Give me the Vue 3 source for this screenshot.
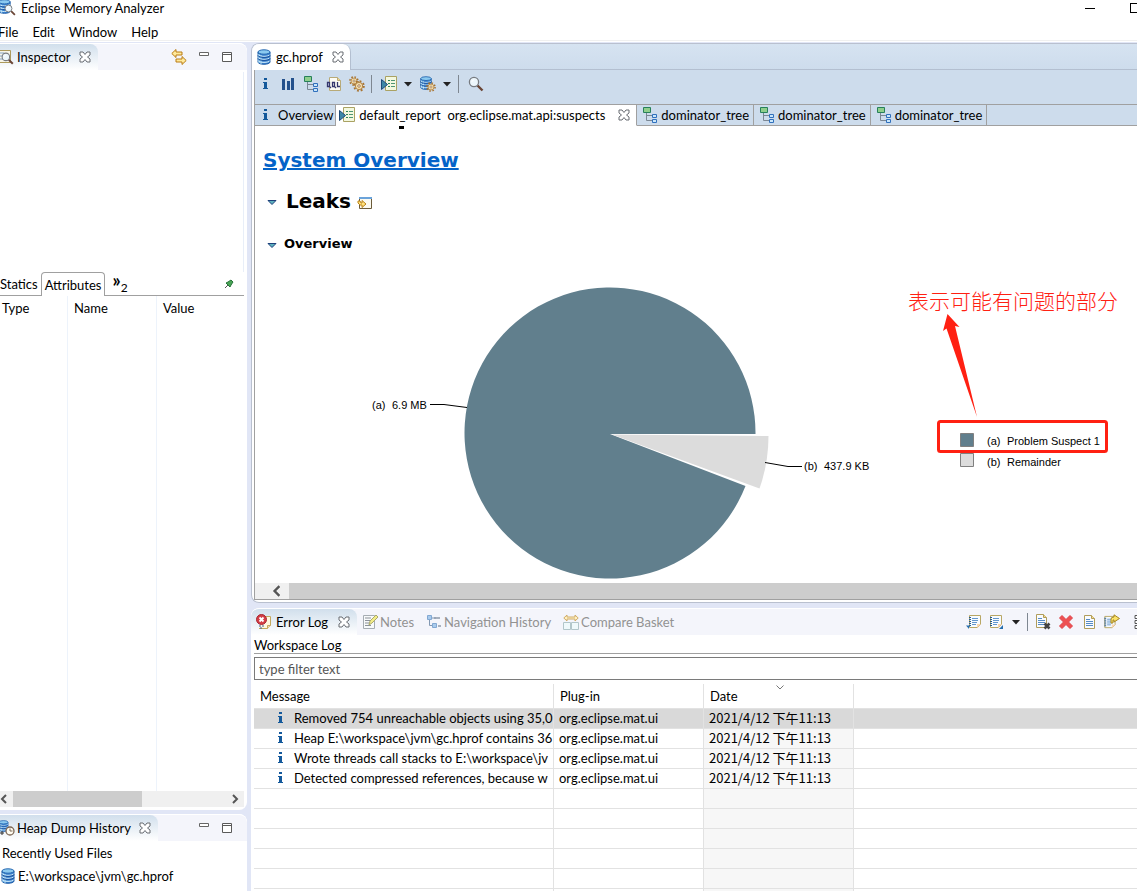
<template>
  <div class="window">
    <svg class="sprite" aria-hidden="true">
      <symbol id="db" viewBox="0 0 16 16">
        <path d="M2 3v10c0 3 12 3 12 0V3z" fill="#3d83cf" stroke="#1b5aa5" />
        <path d="M3 5v9M5 6v9" stroke="#a8dcf6" stroke-width="1" />
        <path d="M2 5.5c1 2.5 11 2.5 12 0M2 8.5c1 2.5 11 2.5 12 0M2 11.500c1 2.500 11 2.500 12 0" fill="none" stroke="#d5f0fc" />
        <path d="M2 6.500c1 2.500 11 2.500 12 0M2 9.500c1 2.500 11 2.500 12 0" fill="none" stroke="#174f9b" />
        <ellipse cx="8" cy="3" rx="6" ry="2.200" fill="#8bc9ef" stroke="#2567b0" />
      </symbol>
      <symbol id="lens" viewBox="0 0 16 16">
        <path d="m9.500 9.500 5 5" stroke="#6b4636" stroke-width="2.400" />
        <circle cx="6" cy="6" r="4.600" fill="#edf6fb" stroke="#777b80" stroke-width="1.300" />
        <path d="M3.800 6A2.500 2.500 0 0 1 6 3.800" fill="none" stroke="#fff" />
      </symbol>
      <symbol id="mat" viewBox="0 0 16 16">
        <use href="#db" x="-3" y="-1" width="15" height="15" />
        <use href="#lens" x="4" y="4" width="12" height="12" />
      </symbol>
      <symbol id="inspector" viewBox="0 0 16 16">
        <path d="M-1 1.500H10.500V13.500H-1" fill="#f7f5e8" stroke="#ad9a5c" />
        <path d="M0 4h4M0 7h3M0 10h4" stroke="#83a2c7" />
        <use href="#lens" x="1" y="3" width="13" height="13" />
      </symbol>
      <symbol id="close" viewBox="0 0 12 12">
        <path d="M1 1h3l2 2.500L8 1h3v3L8.500 6 11 8v3H8L6 8.500 4 11H1V8l2.500-2L1 4z" fill="#fff" stroke="#686c72" />
      </symbol>
      <symbol id="link" viewBox="0 0 16 16">
        <path d="M.8 4.500 5 .5V3h6v3H5v2.500z" fill="#ffe99a" stroke="#b97b12" />
        <path d="M15.200 11.500 11 7.500V10H5v3h6v2.500z" fill="#ffe99a" stroke="#b97b12" />
      </symbol>
      <symbol id="min" viewBox="0 0 12 12">
        <path d="M1.500 1.500h9v3h-9z" fill="#fff" stroke="#666" />
      </symbol>
      <symbol id="max" viewBox="0 0 12 12">
        <path d="M1.500 1.500h9v9h-9zM1.500 3.500h9" fill="#fff" stroke="#5a5a5a" />
      </symbol>
      <symbol id="info" viewBox="0 0 16 16">
        <path d="M7 2h3v2H7zM6 6h4v6h1v1H6v-1h1V7H6z" fill="#14599b" />
      </symbol>
      <symbol id="bars" viewBox="0 0 16 16">
        <path d="M2 3h3v11H2zM7 5h3v9H7zM11 2h3v12h-3z" fill="#24518c" />
      </symbol>
      <symbol id="tree" viewBox="0 0 16 16">
        <path d="M4.500 6v7.500H10M4.500 8.500H10" fill="none" stroke="#7b8794" />
        <path d="M1.500.5h7v5h-7z" fill="#8fce8c" stroke="#27805a" />
        <path d="M10.500 7.500h4v3h-4zM10.500 12.500h4v3h-4z" fill="#c9e6fa" stroke="#3070bd" />
      </symbol>
      <symbol id="oql" viewBox="0 0 16 16">
        <path d="M3.500 1.500h8l3 3v10h-11z" fill="#fdfcf4" stroke="#b8aa78" />
        <path d="M11.500 1.500v3h3" fill="#f0d890" stroke="#b8aa78" />
        <path d="M1.500 6.500h2v4h-2zM6.500 6.500h2v4h-2zM3 10l2 2M8 10l2 2M11.500 6v4.500H14" fill="none" stroke="#35376d" stroke-width="1.300" />
      </symbol>
      <symbol id="gear" viewBox="0 0 16 16">
        <circle cx="8" cy="8" r="6.500" fill="none" stroke="#a87431" stroke-width="2.400" stroke-dasharray="2.500 2.600" />
        <circle cx="8" cy="8" r="4.700" fill="#f7e3b4" stroke="#b58645" stroke-width="1.400" />
        <circle cx="8" cy="8" r="1.700" fill="#fff" stroke="#8d5c29" />
      </symbol>
      <symbol id="gears" viewBox="0 0 16 16">
        <use href="#gear" x="0" y="0" width="10" height="10" />
        <use href="#gear" x="4" y="4" width="12" height="12" />
      </symbol>
      <symbol id="report" viewBox="0 0 16 16">
        <path d="M4.500.500h11v14h-11z" fill="#f3f8df" stroke="#aaa263" />
        <path d="M7 4.500h2M7 7.500h2M7 10.500h2" stroke="#318355" />
        <path d="M10 4.500h4M10 7.500h4M10 10.500h4" stroke="#4e9573" />
        <path d="M.5 3.500v10l6-5z" fill="#3e88a6" stroke="#1f4b78" />
      </symbol>
      <symbol id="dbgear" viewBox="0 0 16 16">
        <use href="#db" x="-1" y="0" width="14" height="14" />
        <use href="#gear" x="6" y="6" width="10" height="10" />
      </symbol>
      <symbol id="pin" viewBox="0 0 10 10">
        <path d="m1 9 3-3" stroke="#555" />
        <path d="m2 4 2-1 3-2 2 2-2 3-1 2z" fill="#49a456" stroke="#257338" />
      </symbol>
      <symbol id="twisty" viewBox="0 0 10 6">
        <path d="M1 .5h8L5 4.500z" fill="#5cb0bd" stroke="#1d3f7a" />
      </symbol>
      <symbol id="open" viewBox="0 0 16 14">
        <path d="M2.500 1.500h12v11h-12z" fill="#fbfaf1" stroke="#6b5b3a" />
        <path d="M2 2h13" stroke="#6ba3da" stroke-width="2" />
        <path d="M1 5h2l1 2h1V4.500L9 8l-4 3.500V9H3L1 7z" fill="#ffe17c" stroke="#bb8419" />
      </symbol>
      <symbol id="caret" viewBox="0 0 8 5">
        <path d="M0 0h8L4 4.500z" fill="#222" />
      </symbol>
      <symbol id="history" viewBox="0 0 16 16">
        <use href="#db" x="-3" y="0" width="13" height="12" />
        <path d="M0 13h4M2 11v4" stroke="#333" />
        <circle cx="10" cy="11" r="4" fill="#fffdf2" stroke="#7b6655" stroke-width="1.300" />
        <path d="M10 8.500V11h2.500" fill="none" stroke="#7b6655" />
      </symbol>
      <symbol id="errorlog" viewBox="0 0 16 16">
        <path d="M6 2.500h8.500v9l-3 3H3" fill="#fff8df" stroke="#c4a95e" />
        <path d="M11.500 14.500v-3h3" fill="#f8d8b0" stroke="#c4a95e" />
        <circle cx="5.500" cy="5.500" r="5" fill="#d33e46" stroke="#a92630" />
        <path d="m3.500 3.500 4 4m0-4-4 4" stroke="#fff" stroke-width="1.800" />
        <path d="M3 12h2m1 0h2M4 14h2" stroke="#3c5e96" />
      </symbol>
      <symbol id="notes" viewBox="0 0 16 16">
        <path d="M1.500 1.500h11v13h-11z" fill="#f8fafb" stroke="#a6adb3" />
        <path d="M3 4h6M3 6.500h5M3 9h4M3 11.500h6" stroke="#8c9299" />
        <path d="m7 11 1-4 6-6 2 2-6 6z" fill="#f3ed88" stroke="#aaa96d" />
      </symbol>
      <symbol id="nav" viewBox="0 0 16 16">
        <path d="M3.500 4v7.500H7M6 4h4" fill="none" stroke="#8298b2" />
        <path d="M1.500 1.500h4v4h-4zM6.500 9.500h4v4h-4z" fill="#a9cbed" stroke="#82a8d2" />
        <path d="M8 4h6M12 12h3" stroke="#8f9bab" stroke-width="1.500" />
      </symbol>
      <symbol id="compare" viewBox="0 0 16 16">
        <path d="M.8 4 4 1v2h8V1l3.200 3L12 7V5H4v2z" fill="#fff0c1" stroke="#d0ac67" />
        <path d="M.5 8.500h7v7h-7zM8.500 8.500h7v7h-7z" fill="#eff9fb" stroke="#b2c6ca" />
      </symbol>
      <symbol id="logsheet" viewBox="0 0 16 16">
        <path d="M3.500 1.500h11v9l-3 3h-8z" fill="#f7fbff" stroke="#b8a765" />
        <path d="M3 3.500h2M3 5.500h2M3 7.500h2M3 9.500h2M3 11.500h2" stroke="#235a91" />
        <path d="M6 4.500h6M6 6.500h6M6 8.500h5M6 10.500h4" stroke="#6296ce" />
        <path d="M11 14v-4h4z" fill="#f8d6b1" />
      </symbol>
      <symbol id="export" viewBox="0 0 16 16">
        <use href="#logsheet" width="16" height="16" />
        <path d="M0 11.500h5l-2 1.500v2z" fill="#276fae" />
      </symbol>
      <symbol id="import" viewBox="0 0 16 16">
        <use href="#logsheet" x="-2" width="16" height="16" />
        <path d="M14 11v4h-4z" fill="#276fae" />
      </symbol>
      <symbol id="page" viewBox="0 0 16 16">
        <path d="M3.500 1.500h7l3 3v10h-10z" fill="#f8fbff" stroke="#b09d5b" />
        <path d="M10.500 1.500v3h3" fill="#f7dc8b" stroke="#b09d5b" />
        <path d="M5 5.500h4M5 7.500h7M5 9.500h7M5 11.500h7" stroke="#568bc4" />
      </symbol>
      <symbol id="clearlog" viewBox="0 0 16 16">
        <use href="#page" x="-2" y="-1" width="16" height="16" />
        <path d="m9.500 9.500 5 5m0-5-5 5" stroke="#444" stroke-width="2.600" />
      </symbol>
      <symbol id="delete" viewBox="0 0 16 16">
        <path d="m1.500 4 2.500-2.500 4 4 4-4L14.500 4l-4 4 4 4-2.500 2.500-4-4-4 4L1.500 12l4-4z" fill="#ee5052" stroke="#dc4248" />
      </symbol>
      <symbol id="restore" viewBox="0 0 16 16">
        <use href="#logsheet" x="-3" y="1" width="16" height="15" />
        <path d="M7 9V5q0-2 3-2V.8L15.500 4.500 10 8V6H9v3z" fill="#fbe36a" stroke="#a78620" />
      </symbol>
      <symbol id="more" viewBox="0 0 16 16">
        <path d="M2 1.500h4v3H2zM2 6.500h4v3H2zM2 11.500h4v3H2z" fill="#fff" stroke="#555" />
      </symbol>
    </svg>

    <header class="titlebar">
      <svg class="icon"><use href="#mat" /></svg>
      <span class="title">Eclipse Memory Analyzer</span>
      <button class="win-btn minimize" aria-label="Minimize"></button>
      <button class="win-btn maximize" aria-label="Maximize"></button>
    </header>
    <nav class="menubar">
      <button v-for="item in menus" :key="item">{{ item }}</button>
    </nav>

    <main class="workbench">
      <aside class="side">
        <section class="view inspector">
          <div class="view-head">
            <div class="view-tab">
              <svg class="icon"><use href="#inspector" /></svg>
              <span>Inspector</span>
              <button class="close" aria-label="Close Inspector"><svg><use href="#close" /></svg></button>
            </div>
            <div class="view-tools">
              <button aria-label="Link with snapshot"><svg class="icon"><use href="#link" /></svg></button>
              <button aria-label="Minimize view"><svg class="small"><use href="#min" /></svg></button>
              <button aria-label="Maximize view"><svg class="small"><use href="#max" /></svg></button>
            </div>
          </div>
          <div class="inspector-top"></div>
          <div class="attr-tabs">
            <button>Statics</button>
            <button class="active">Attributes</button>
            <button class="overflow" aria-label="More tabs"><b>»</b><sub>2</sub></button>
            <button class="pin" aria-label="Pin"><svg><use href="#pin" /></svg></button>
          </div>
          <table class="attrs">
            <thead>
              <tr><th>Type</th><th>Name</th><th>Value</th></tr>
            </thead>
            <tbody>
              <tr><td></td><td></td><td></td></tr>
            </tbody>
          </table>
          <div class="hscroll side-scroll">
            <button aria-label="Scroll left"><svg viewBox="0 0 8 10"><path d="M6 1 2 5l4 4" /></svg></button>
            <span class="track"><span class="thumb"></span></span>
            <button aria-label="Scroll right"><svg viewBox="0 0 8 10"><path d="m2 1 4 4-4 4" /></svg></button>
          </div>
        </section>

        <section class="view history">
          <div class="view-head">
            <div class="view-tab">
              <svg class="icon"><use href="#history" /></svg>
              <span>Heap Dump History</span>
              <button class="close" aria-label="Close Heap Dump History"><svg><use href="#close" /></svg></button>
            </div>
            <div class="view-tools">
              <button aria-label="Minimize view"><svg class="small"><use href="#min" /></svg></button>
              <button aria-label="Maximize view"><svg class="small"><use href="#max" /></svg></button>
            </div>
          </div>
          <p class="recent">Recently Used Files</p>
          <a class="recent-file" href="#"><svg class="icon"><use href="#db" /></svg>E:\workspace\jvm\gc.hprof</a>
        </section>
      </aside>

      <div class="content">
        <section class="editor">
          <div class="editor-head">
            <div class="editor-tab">
              <svg class="icon"><use href="#db" /></svg>
              <span>gc.hprof</span>
              <button class="close" aria-label="Close gc.hprof"><svg><use href="#close" /></svg></button>
            </div>
          </div>
          <div class="editor-inner">
            <div class="toolbar">
              <button v-for="name in ['info', 'bars', 'tree', 'oql', 'gears']" :key="name" :aria-label="name">
                <svg class="icon"><use :href="'#' + name" /></svg>
              </button>
              <i class="sep"></i>
              <button v-for="name in ['report', 'dbgear']" :key="name" class="drop" :aria-label="name">
                <svg class="icon"><use :href="'#' + name" /></svg>
                <svg class="caret"><use href="#caret" /></svg>
              </button>
              <i class="sep"></i>
              <button aria-label="Search"><svg class="icon"><use href="#lens" /></svg></button>
            </div>
            <div class="page-tabs">
              <button class="page-tab first"><svg class="icon"><use href="#info" /></svg>Overview</button>
              <div class="page-tab active">
                <svg class="icon"><use href="#report" /></svg>
                <span>default_report&nbsp; org.eclipse.mat.api:suspects</span>
                <button class="close" aria-label="Close report"><svg><use href="#close" /></svg></button>
              </div>
              <button v-for="n in 3" :key="n" class="page-tab tree"><svg class="icon"><use href="#tree" /></svg>dominator_tree</button>
              <span class="rest"></span>
            </div>
            <article class="report">
              <h1><a href="#">System Overview</a></h1>
              <h2>
                <svg class="twisty"><use href="#twisty" /></svg>Leaks
                <svg class="open"><use href="#open" /></svg>
              </h2>
              <h3><svg class="twisty"><use href="#twisty" /></svg>Overview</h3>
              <svg class="chart" width="882" height="320" viewBox="255 263 882 320">
                <path d="M610 434 755.500 434A145.500 145.500 0 1 0 745.500 486Z" fill="#617f8d" />
                <path d="M612 434.500 768.500 436A157 157 0 0 1 759.500 488.500Z" fill="#dcdcdc" />
                <path d="M430 404.500h14l23 3M765 462.500l23 4h14" class="leader" />
                <g class="label">
                  <text x="372" y="409">(a)</text>
                  <text x="392" y="409">6.9 MB</text>
                  <text x="804" y="470">(b)</text>
                  <text x="824" y="470">437.9 KB</text>
                  <text x="987" y="445">(a)</text>
                  <text x="1007" y="445">Problem Suspect 1</text>
                  <text x="987" y="466">(b)</text>
                  <text x="1007" y="466">Remainder</text>
                </g>
                <path d="M960.500 433.500h13v13h-13z" fill="#617f8d" stroke="#808080" />
                <path d="M960.500 453.500h13v13h-13z" fill="#dcdcdc" stroke="#808080" />
                <rect x="938.500" y="421.500" width="168" height="30" rx="2" class="mark" />
                <path d="M977 417 955 326 959.500 327 947.500 314 943 331 946.500 328.500Z" fill="#ff2012" />
                <text x="908" y="309" class="note">表示可能有问题的部分</text>
              </svg>
            </article>
            <div class="hscroll editor-scroll">
              <button aria-label="Scroll left"><svg viewBox="0 0 8 10"><path d="M6 1 2 5l4 4" /></svg></button>
              <span class="track"><span class="thumb full"></span></span>
            </div>
          </div>
        </section>

        <section class="log">
          <div class="view-head">
            <div class="view-tab">
              <svg class="icon"><use href="#errorlog" /></svg>
              <span>Error Log</span>
              <button class="close" aria-label="Close Error Log"><svg><use href="#close" /></svg></button>
            </div>
            <button v-for="tab in logTabs" :key="tab.label" class="idle-tab">
              <svg class="icon"><use :href="'#' + tab.icon" /></svg>{{ tab.label }}
            </button>
            <div class="log-tools">
              <button aria-label="Export log"><svg class="icon"><use href="#export" /></svg></button>
              <button aria-label="Import log"><svg class="icon"><use href="#import" /></svg></button>
              <button aria-label="Import menu"><svg class="caret"><use href="#caret" /></svg></button>
              <i class="sep"></i>
              <button v-for="name in ['clearlog', 'delete', 'page', 'restore']" :key="name" :aria-label="name">
                <svg class="icon"><use :href="'#' + name" /></svg>
              </button>
              <button class="more" aria-label="Group by"><svg class="icon"><use href="#more" /></svg></button>
            </div>
          </div>
          <label class="log-title" for="filter">Workspace Log</label>
          <div class="filter"><input id="filter" v-model="filter" type="text" placeholder="type filter text" /></div>
          <table class="log-table">
            <colgroup><col class="c-msg" /><col class="c-plug" /><col class="c-date" /><col /></colgroup>
            <thead>
              <tr>
                <th>Message</th>
                <th>Plug-in</th>
                <th class="sorted">Date<svg viewBox="0 0 8 5"><path d="m.5.500 3.500 3.500L7.500.500" /></svg></th>
                <th></th>
              </tr>
            </thead>
            <tbody>
              <tr v-for="(row, i) in rows" :key="row" :class="{ selected: i === 0 }">
                <td><div class="msg"><svg class="icon"><use href="#info" /></svg>{{ row }}</div></td>
                <td>org.eclipse.mat.ui</td>
                <td class="date">2021/4/12 下午11:13</td>
                <td></td>
              </tr>
              <tr v-for="n in 6" :key="'empty' + n">
                <td></td><td></td><td class="date"></td><td></td>
              </tr>
            </tbody>
          </table>
        </section>
      </div>
    </main>
  </div>
</template>

<script setup>
import { ref } from 'vue'

const menus = ['File', 'Edit', 'Window', 'Help']
const filter = ref('')

const logTabs = [
  { icon: 'notes', label: 'Notes' },
  { icon: 'nav', label: 'Navigation History' },
  { icon: 'compare', label: 'Compare Basket' }
]

const rows = [
  'Removed 754 unreachable objects using 35,0',
  'Heap E:\\workspace\\jvm\\gc.hprof contains 36',
  'Wrote threads call stacks to E:\\workspace\\jv',
  'Detected compressed references, because w'
]
</script>

<style>
body {
  margin: 0;
  overflow: hidden;
}
</style>

<style scoped>
.window {
  display: flex;
  flex-direction: column;
  height: 100vh;
  overflow: hidden;
  background: #fff;
  color: #000;
  font: 13px/20px Lato, "Noto Sans CJK SC", sans-serif;
}

.sprite {
  position: absolute;
  width: 0;
  height: 0;
}

button,
input {
  font: inherit;
  color: inherit;
}

button {
  padding: 0;
  border: 0;
  background: none;
  white-space: nowrap;
}

svg {
  display: block;
  flex: none;
}

.icon {
  width: 16px;
  height: 16px;
}

.small {
  width: 12px;
  height: 12px;
}

.caret {
  width: 8px;
  height: 5px;
}

.close svg {
  width: 12px;
  height: 12px;
}

.sep {
  width: 1px;
  height: 18px;
  background: #7e8791;
}

.titlebar {
  display: flex;
  align-items: center;
  height: 16px;
}

.title {
  flex: 1;
  margin-left: 5px;
  line-height: 16px;
}

.minimize {
  width: 10px;
  height: 1px;
  margin-right: 35px;
  background: #000;
}

.maximize {
  width: 10px;
  height: 10px;
  margin-right: -3px;
  border: 1px solid #000;
}

.menubar {
  display: flex;
  gap: 14px;
  height: 25px;
  padding-top: 6px;
  padding-bottom: 2px;
  box-sizing: border-box;
  margin: 0 0 1px -2px;
  border-bottom: 1px solid #f0f0f0;
}

.workbench {
  display: flex;
  flex: 1;
  min-height: 0;
  gap: 4px;
  padding-top: 1px;
  background: #e1e6f6;
}

.side {
  display: flex;
  flex-direction: column;
  flex: none;
  gap: 4px;
  width: 247px;
}

.view {
  background: #fff;
}

.view-head {
  display: flex;
  align-items: stretch;
  height: 26px;
  background: #f4f5fb;
  border-top: 1px solid #fff;
  border-radius: 0 8px 0 0;
}

.view-tab {
  display: flex;
  align-items: center;
  padding-right: 7px;
  border-radius: 0 8px 0 0;
  background: linear-gradient(#d1dfec, #fff);
}

.view-tab span {
  margin: 0 8px 0 1px;
  white-space: nowrap;
}

.view-tools {
  display: flex;
  align-items: center;
  gap: 11px;
  margin-left: auto;
  padding-right: 14px;
}

.inspector {
  display: flex;
  flex: 1;
  flex-direction: column;
  min-height: 0;
  border-radius: 0 8px 8px 0;
}

.inspector-top {
  height: 200px;
  margin: 2px 3px 0 0;
  border-right: 1px solid #e8eef8;
}

.attr-tabs {
  display: flex;
  height: 24px;
  margin-right: 3px;
  box-shadow: inset 0 -1px #a0a0a0;
}

.attr-tabs .active {
  margin-left: 3px;
  padding: 0 3px;
  border: 1px solid #a0a0a0;
  border-bottom: 0;
  border-radius: 4px 4px 0 0;
  background: #fff;
}

.overflow {
  display: flex;
  align-items: center;
  margin-left: 7px;
}

.overflow b {
  font-size: 18px;
  line-height: 12px;
  padding-bottom: 8px;
}

.overflow sub {
  font-size: 12px;
  line-height: 12px;
  padding-top: 8px;
}

.pin {
  margin: 0 10px 0 auto;
}

.pin svg {
  width: 10px;
  height: 10px;
}

.attrs {
  flex: 1;
  width: 100%;
  table-layout: fixed;
  border-collapse: collapse;
  display: flex;
  flex-direction: column;
}

.attrs tbody {
  display: flex;
  flex: 1;
}

.attrs tr {
  display: flex;
  width: 100%;
}

.attrs th,
.attrs td {
  flex: 1;
  box-sizing: border-box;
  padding: 2px 6px;
  font-weight: 400;
  text-align: left;
  border-right: 1px solid #edf3fb;
}

.attrs th:nth-child(1),
.attrs td:nth-child(1) {
  flex: none;
  width: 68px;
  padding-left: 2px;
}

.attrs th:nth-child(2),
.attrs td:nth-child(2) {
  flex: none;
  width: 89px;
}

.attrs th:last-child,
.attrs td:last-child {
  border-right: 0;
}

.hscroll {
  display: flex;
  align-items: stretch;
  height: 16px;
  background: #f0f0f0;
}

.hscroll button {
  display: grid;
  place-items: center;
  width: 13px;
}

.hscroll svg {
  width: 8px;
  height: 10px;
  fill: none;
  stroke: #555;
  stroke-width: 2;
}

.side-scroll button {
  justify-content: start;
}

.track {
  display: flex;
  flex: 1;
}

.thumb {
  width: 59%;
  background: #cdcdcd;
}

.thumb.full {
  width: 100%;
}

.side-scroll {
  margin: 0 3px 3px 0;
}

.history {
  height: 77px;
  border-radius: 0 8px 0 0;
}

.recent {
  margin: 2px 2px 3px;
}

.recent-file {
  display: flex;
  gap: 2px;
  align-items: center;
  color: inherit;
  text-decoration: none;
}

.content {
  display: flex;
  flex: 1;
  flex-direction: column;
  gap: 5px;
  min-width: 0;
}

.editor {
  padding-bottom: 2px;
  border: 1px solid #b9c0cf;
  border-right: 0;
  border-radius: 8px 0 0 8px;
  background: #fff;
  overflow: hidden;
}

.editor-head {
  display: flex;
  height: 26px;
  background: linear-gradient(#d6e3f1, #cddcec);
  box-shadow: inset 0 -1px #b3bfd0;
}

.editor-tab {
  display: flex;
  align-items: center;
  gap: 4px;
  padding: 0 6px 0 4px;
  border-right: 1px solid #b3bfd0;
  border-radius: 0 8px 0 0;
  background: #fff;
}

.editor-tab span {
  margin-right: 5px;
}

.editor-inner {
  margin-left: 2px;
  border-left: 1px solid #a0a0a0;
  border-bottom: 1px solid #a0a0a0;
}

.toolbar {
  display: flex;
  align-items: center;
  gap: 7px;
  height: 28px;
  padding: 0 2px 6px;
  background: #cddcec;
}

.drop {
  display: flex;
  align-items: center;
  gap: 7px;
  margin-right: 1px;
}

.toolbar .sep {
  margin: 0 2px 0 -1px;
}

.page-tabs {
  display: flex;
  height: 22px;
  background: #cddcec;
}

.page-tab {
  display: flex;
  align-items: center;
  border: 1px solid #a0a0a0;
  border-left: 0;
  white-space: nowrap;
}

.page-tab.first {
  gap: 5px;
  padding: 0 2px;
}

.page-tab.active {
  position: relative;
  gap: 4px;
  padding: 0 6px 0 3px;
  border-bottom-color: #fff;
  background: #fff;
}

.page-tab.active .close {
  margin-left: 9px;
}

/* mnemonic mark under the tab title */
.page-tab.active::after {
  content: "";
  position: absolute;
  left: 63px;
  top: 21px;
  width: 5px;
  height: 3px;
  background: #000;
}

.page-tab.tree {
  gap: 3px;
  padding: 0 4px 0 5px;
}

.rest {
  flex: 1;
  border: solid #a0a0a0;
  border-width: 1px 0;
}

.report {
  height: 457px;
  overflow: hidden;
  font-family: "DejaVu Sans", sans-serif;
}

.report h1 {
  margin: 20px 8px 0;
  font-size: 20px;
  line-height: 28px;
}

.report h1 a {
  color: #0563c8;
  text-decoration-thickness: 2px;
}

.report h2 {
  display: flex;
  align-items: center;
  margin: 13px 12px 0;
  font-size: 20px;
  line-height: 28px;
}

.report h3 {
  display: flex;
  align-items: center;
  margin: 19px 12px 0;
  font-size: 13px;
  line-height: 20px;
}

.twisty {
  width: 10px;
  height: 6px;
  margin: 4px 7px 0 0;
}

h2 .twisty {
  margin-right: 9px;
}

.open {
  width: 16px;
  height: 14px;
  margin: 4px 0 0 6px;
}

.chart {
  margin-top: 9px;
}

.label {
  font: 11px "Liberation Sans", sans-serif;
}

.leader {
  fill: none;
  stroke: #000;
}

.mark {
  fill: none;
  stroke: #ff2012;
  stroke-width: 3;
}

.note {
  fill: #ff2012;
  font: 300 21px "Noto Sans CJK SC", sans-serif;
}

.editor-scroll button {
  width: 34px;
  padding-left: 10px;
}

.editor-scroll svg {
  width: 10px;
  height: 12px;
}

.log {
  flex: 1;
  min-height: 0;
  padding-left: 3px;
  overflow: hidden;
  border-radius: 8px 0 0 0;
  background: #fff;
}

.log .view-head {
  margin-left: -3px;
  border-radius: 8px 0 0 0;
}

.log .view-tab {
  padding-left: 5px;
  border-radius: 8px 8px 0 0;
}

.log .view-tab span {
  margin: 0 10px 0 4px;
}

.idle-tab {
  display: flex;
  align-items: center;
  gap: 2px;
  margin-left: 5px;
  padding-right: 7px;
  color: #929292;
}

.log-tools {
  display: flex;
  align-items: center;
  gap: 7px;
  margin-left: auto;
  overflow: hidden;
}

.log-tools .more {
  width: 4px;
  margin-left: 6px;
  overflow: hidden;
}

.log-title {
  display: block;
  height: 18px;
  line-height: 20px;
  border-bottom: 1px solid #a0a0a0;
}

.filter {
  padding: 3px 0 4px;
}

.filter input {
  display: block;
  width: calc(100% + 2px);
  height: 23px;
  box-sizing: border-box;
  padding: 0 4px;
  border: 1px solid #7a7a7a;
  border-radius: 0;
  outline: 0;
}

.filter input::placeholder {
  color: #555;
}

.log-table {
  width: 100%;
  table-layout: fixed;
  border-collapse: separate;
  border-spacing: 0;
}

.c-msg {
  width: 300px;
}

.c-plug,
.c-date {
  width: 150px;
}

.log-table th,
.log-table td {
  height: 20px;
  box-sizing: border-box;
  padding: 0 0 0 6px;
  border-right: 1px solid #e2e2e2;
  border-bottom: 1px solid #e2e2e2;
  font-weight: 400;
  line-height: 18px;
  text-align: left;
  white-space: nowrap;
  overflow: hidden;
}

.log-table td {
  padding-left: 5px;
  vertical-align: top;
}

.log-table th:last-child,
.log-table td:last-child {
  border-right: 0;
}

.log-table th {
  height: 25px;
}

.log-table .sorted {
  position: relative;
}

.sorted svg {
  position: absolute;
  top: 1px;
  left: 72px;
  width: 8px;
  height: 5px;
  fill: none;
  stroke: #777;
}

.log-table .date {
  background: #f7f7f7;
  font-family: "Noto Sans CJK SC", sans-serif;
}

.log-table .selected td {
  background: #d9d9d9;
}

.msg {
  display: flex;
  align-items: center;
  gap: 6px;
  padding-left: 13px;
}
</style>
